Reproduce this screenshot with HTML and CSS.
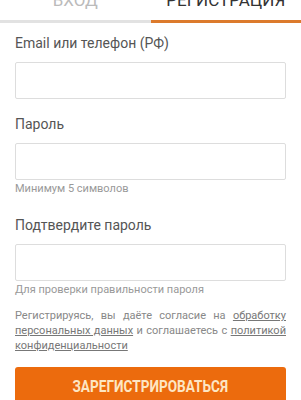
FILE: index.html
```html
<!DOCTYPE html>
<html lang="ru">
<head>
  <meta charset="UTF-8" />
  <meta name="viewport" content="width=device-width, initial-scale=1.0" />
  <title>Регистрация</title>
  <link rel="stylesheet" href="styles.css">
</head>
<body>
  <div class="tabs">
    <a class="tab" href="#">Вход</a>
    <a class="tab active" href="#">Регистрация</a>
  </div>

  <form class="reg-form">
    <label class="field-label" for="login">Email или телефон (РФ)</label>
    <input class="field" id="login" type="text" />

    <label class="field-label" for="pass">Пароль</label>
    <input class="field" id="pass" type="password" />
    <p class="hint">Минимум 5 символов</p>

    <label class="field-label" for="pass2">Подтвердите пароль</label>
    <input class="field" id="pass2" type="password" />
    <p class="hint">Для проверки правильности пароля</p>

    <p class="consent">
      Регистрируясь, вы даёте согласие на <a href="#">обработку персональных данных</a> и соглашаетесь с <a href="#">политикой конфиденциальности</a>
    </p>

    <button class="submit" type="button"><span>Зарегистрироваться</span></button>
  </form>
</body>
</html>
```

FILE: styles.css
```css
body {
  font-family: Roboto, "Liberation Sans", sans-serif;
  margin: 0;
  background-color: #fff;
  color: #555;
}

.tabs {
  display: flex;
  margin-top: -10px;
}

.tab {
  flex: 1;
  text-align: center;
  text-transform: uppercase;
  text-decoration: none;
  font-size: 17px;
  line-height: 20px;
  padding-bottom: 10px;
  color: #bbb;
  border-bottom: 3px solid #e2e2e2;
}

.tab.active {
  color: #333;
  border-bottom-color: #dc7a2c;
}

.reg-form {
  padding: 0 15px;
}

.field-label {
  display: block;
  font-size: 14px;
  line-height: 20px;
  margin: 10px 0 9px;
  color: #555;
}

.field {
  display: block;
  box-sizing: border-box;
  width: 100%;
  height: 37px;
  border: 1px solid #ddd;
  border-radius: 2px;
  margin: 0 0 15px;
}

.hint {
  font-size: 11px;
  line-height: 14px;
  color: #999;
  margin: -13px 0 19px;
}

.consent {
  font-size: 11px;
  line-height: 15px;
  color: #888;
  text-align: justify;
  margin: -8px 0 14px;
}

.consent a {
  color: #777;
}

.submit {
  display: block;
  width: 100%;
  height: 37px;
  border: none;
  border-radius: 3px;
  background-color: #ec6b0d;
  color: #fde6c3;
  font-family: Roboto, "Liberation Sans", sans-serif;
  font-weight: bold;
  font-size: 17px;
  text-transform: uppercase;
  cursor: pointer;
}

.submit span {
  display: inline-block;
  transform: scaleX(0.8);
}
```
